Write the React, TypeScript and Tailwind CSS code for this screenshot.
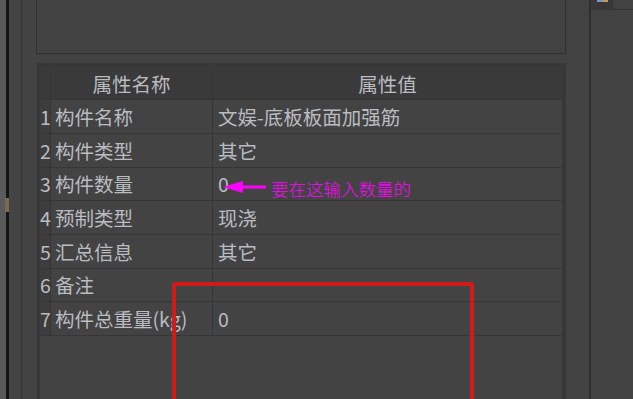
import React from "react";

const rows: [string, string, string, number][] = [
  ["1", "构件名称", "文娱-底板板面加强筋", 34],
  ["2", "构件类型", "其它", 34],
  ["3", "构件数量", "0", 33],
  ["4", "预制类型", "现浇", 34],
  ["5", "汇总信息", "其它", 34],
  ["6", "备注", "", 33],
  ["7", "构件总重量(kg)", "0", 34],
];

export default function App() {
  const font = { fontFamily: '"Noto Sans CJK SC", "Noto Sans", sans-serif' };
  return (
    <div
      className="relative flex h-[399px] w-[633px] overflow-hidden bg-[#424242] text-[#b9bcc0]"
      style={font}
    >
      {/* left edge strips */}
      <div className="w-[6px] shrink-0 bg-[#5a5a5a]" />
      <div className="relative w-[3px] shrink-0 bg-[#161616]">
        <div className="absolute left-[-1px] top-[198px] h-[14px] w-[4px] bg-[#7a6a55]" />
      </div>
      <div className="w-[12px] shrink-0 bg-[#444444]" />
      <div className="w-[1px] shrink-0 bg-[#363636]" />
      <div className="w-[14px] shrink-0 bg-[#434343]" />

      {/* main column */}
      <div className="flex w-[530px] shrink-0 flex-col">
        <div className="h-[54px] shrink-0 border-b border-l border-r border-[#2f2f2f] bg-[#424242]" />
        <div className="h-[9px] shrink-0" />
        <div className="ml-[1px] flex flex-1 flex-col border-l-[3px] border-r-[4px] border-t-[3px] border-[#373737] bg-[#434343]">
          {/* header */}
          <div className="flex h-[34px] shrink-0 border-b border-[#353535] bg-[#3a3a3a] text-[19.5px] leading-none">
            <div className="w-[11px] shrink-0 border-r border-[#353535]" />
            <div className="flex w-[162px] shrink-0 items-center justify-center border-r border-[#353535] pt-[2px]">
              属性名称
            </div>
            <div className="flex flex-1 items-center justify-center pt-[2px]">属性值</div>
          </div>
          {rows.map(([n, k, v, h]) => (
            <div
              key={n}
              className="flex shrink-0 border-b border-[#363636] text-[19.5px] leading-none"
              style={{ height: h }}
            >
              <div className="flex w-[11px] shrink-0 items-center justify-center border-r border-[#363636] bg-[#3d3d3d] pl-[1px]">
                {n}
              </div>
              <div className="flex w-[162px] shrink-0 items-center border-r border-[#363636] pl-[4px] whitespace-nowrap">
                {k}
              </div>
              <div className="flex flex-1 items-center pl-[5px] whitespace-nowrap">{v}</div>
            </div>
          ))}
          <div className="flex-1" />
        </div>
      </div>

      {/* gap + divider */}
      <div className="w-[23px] shrink-0 bg-[#424242]" />
      <div className="w-[2px] shrink-0 bg-[#303030]" />

      {/* right panel */}
      <div className="flex flex-1 flex-col bg-[#424242]">
        <div className="flex h-[10px] shrink-0">
          <div className="relative w-[22px] shrink-0 bg-[#383838]">
            <div className="absolute left-[6px] top-0 h-[2px] w-[6px] bg-[#7a96b8]" />
            <div className="absolute left-[12px] top-0 h-[2px] w-[5px] bg-[#c79a5a]" />
          </div>
          <div className="flex-1 border-b border-[#333333]" />
        </div>
        <div className="flex-1" />
      </div>

      {/* annotation arrow */}
      <svg
        className="absolute left-[222px] top-[180px]"
        width="46"
        height="14"
        viewBox="0 0 46 14"
      >
        <polygon points="1,7 21,1 21,13" fill="#ff00ff" />
        <rect x="18" y="5.5" width="26" height="3" fill="#ff00ff" />
      </svg>
      <div
        className="absolute left-[271px] top-[177px] whitespace-nowrap text-[17.5px] leading-[24px] text-[#ff00ff]"
        style={{ fontFamily: '"Noto Sans CJK SC", sans-serif', fontWeight: 300 }}
      >
        要在这输入数量的
      </div>

      {/* red highlight box */}
      <div className="absolute left-[172px] top-[282px] h-[200px] w-[302px] rounded-[3px] border-[4px] border-[#d01b1b]" />
    </div>
  );
}
